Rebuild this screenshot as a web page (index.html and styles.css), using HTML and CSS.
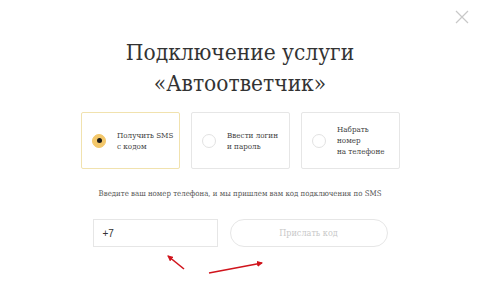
FILE: index.html
```html
<!DOCTYPE html>
<html lang="ru">
<head>
<meta charset="utf-8">
<title>Автоответчик</title>
<link rel="stylesheet" href="styles.css">
</head>
<body>
<div class="modal">
  <button class="close" aria-label="Закрыть">
    <svg width="14" height="14" viewBox="0 0 14 14"><path d="M1 1L13 13M13 1L1 13" stroke="#c8c8c8" stroke-width="1.2" fill="none"/></svg>
  </button>
  <h1 class="title">Подключение услуги<br>«Автоответчик»</h1>
  <div class="options">
    <label class="option selected">
      <span class="radio"><span class="dot"></span></span>
      <span class="option-text">Получить SMS<br>с кодом</span>
    </label>
    <label class="option">
      <span class="radio"></span>
      <span class="option-text">Ввести логин<br>и пароль</span>
    </label>
    <label class="option">
      <span class="radio"></span>
      <span class="option-text">Набрать<br>номер<br>на телефоне</span>
    </label>
  </div>
  <p class="hint">Введите ваш номер телефона, и мы пришлем вам код подключения по SMS</p>
  <div class="form">
    <div class="phone">+7</div>
    <button class="send">Прислать код</button>
  </div>
  <svg class="arrows" width="480" height="296" viewBox="0 0 480 296">
    <defs>
      <marker id="ah" markerWidth="6" markerHeight="6" refX="5" refY="3" orient="auto" markerUnits="userSpaceOnUse">
        <path d="M0 0L6 3L0 6Z" fill="#d0141c"/>
      </marker>
    </defs>
    <path d="M184 269L168 256" stroke="#d0141c" stroke-width="1.6" marker-end="url(#ah)"/>
    <path d="M209 273L262 263" stroke="#d0141c" stroke-width="1.6" marker-end="url(#ah)"/>
  </svg>
</div>
</body>
</html>
```
FILE: styles.css
```css
* { box-sizing: border-box; }
html, body { margin: 0; padding: 0; background: #fff; }
.modal {
  position: relative;
  width: 480px;
  height: 296px;
  padding-top: 37px;
  display: flex;
  flex-direction: column;
  align-items: center;
  font-family: "DejaVu Serif Condensed", "DejaVu Serif", serif;
  color: #333;
}
.close {
  position: absolute;
  top: 10px;
  left: 455px;
  width: 14px;
  height: 14px;
  padding: 0;
  border: 0;
  background: none;
}
.close svg { display: block; }
.title {
  margin: 0;
  font-weight: normal;
  font-size: 22.5px;
  line-height: 31px;
  text-align: center;
  color: #333;
}
.options {
  display: flex;
  gap: 11px;
  margin-top: 13px;
  margin-left: 1px;
}
.option {
  width: 99px;
  height: 57px;
  border: 1px solid #e6e6e6;
  border-radius: 2px;
  display: flex;
  align-items: center;
  padding-left: 10px;
  gap: 11px;
}
.option.selected { border-color: #f1e2ae; }
.radio {
  width: 14px;
  height: 14px;
  border-radius: 50%;
  border: 1px solid #e2e2e2;
  flex: none;
  display: flex;
  align-items: center;
  justify-content: center;
}
.selected .radio {
  background: #f3c76a;
  border-color: #f3c76a;
}
.dot {
  width: 5px;
  height: 5px;
  border-radius: 50%;
  background: #1a1a1a;
}
.option-text {
  font-size: 8px;
  line-height: 11px;
  color: #444;
}
.hint {
  margin: 20px 0 0;
  font-size: 7.8px;
  line-height: 10px;
  color: #555;
  text-align: center;
}
.form {
  display: flex;
  gap: 12px;
  margin-top: 20px;
  margin-left: 0;
}
.phone {
  width: 125px;
  height: 28px;
  border: 1px solid #e6e6e6;
  padding-left: 9px;
  display: flex;
  align-items: center;
  font-family: "Liberation Sans", Arial, sans-serif;
  font-size: 10px;
  color: #333;
}
.send {
  width: 158px;
  height: 28px;
  border: 1px solid #e6e6e6;
  border-radius: 14px;
  background: #fff;
  font-family: "DejaVu Serif Condensed", "DejaVu Serif", serif;
  font-size: 9px;
  color: #c8c8c8;
  padding: 0;
}
.arrows {
  position: absolute;
  left: 0;
  top: 0;
  pointer-events: none;
}
```
